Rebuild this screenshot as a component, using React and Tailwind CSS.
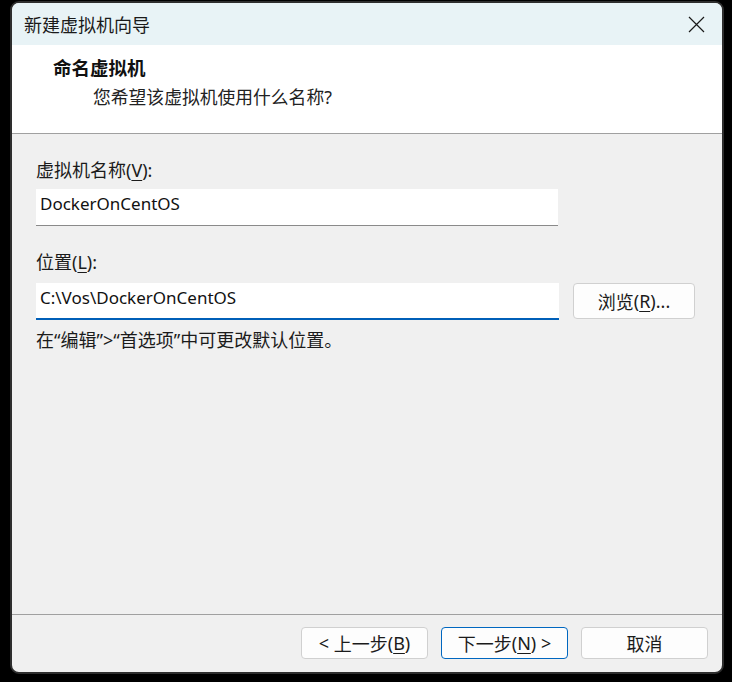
import React from "react";

const cjk = { fontFamily: '"Noto Sans CJK SC", "Noto Sans", sans-serif' };
const latin = { fontFamily: '"Noto Sans", "Noto Sans CJK SC", sans-serif' };

function L({ children }) {
  return <span style={latin}>{children}</span>;
}

function Btn({ children, primary, className = "" }) {
  return (
    <button
      className={`h-[32px] w-[127px] rounded-[4px] bg-[#fdfdfd] text-[18px] text-[#1b1b1b] flex items-center justify-center ${
        primary ? "border border-[#0067c0]" : "border border-[#d0d0d0]"
      } ${className}`}
      style={cjk}
    >
      {children}
    </button>
  );
}

export default function App() {
  return (
    <div className="w-[732px] h-[682px] bg-black pl-[10px] pt-[1px]">
      <div className="w-[714px] h-[673px] border-2 border-[#2e2e2e] rounded-[9px] overflow-hidden flex flex-col bg-[#f0f0f0]">
        {/* title bar */}
        <div className="h-[42px] bg-[#e8f3f6] flex items-center justify-between pl-[12px] pr-[16px] shrink-0">
          <span className="text-[18px] text-[#1a1a1a]" style={cjk}>
            新建虚拟机向导
          </span>
          <svg width="17" height="17" viewBox="0 0 17 17" className="mr-[1px]">
            <path d="M1 1 L16 16 M16 1 L1 16" stroke="#1a1a1a" strokeWidth="1.2" fill="none" />
          </svg>
        </div>
        {/* header */}
        <div className="h-[89px] bg-white border-b border-[#a0a0a0] shrink-0 pl-[41px] pt-[8px]">
          <div className="text-[18.5px] font-bold text-[#111] leading-[28px]" style={cjk}>
            命名虚拟机
          </div>
          <div className="text-[17.8px] text-[#222] leading-[30px] pl-[40px]" style={cjk}>
            您希望该虚拟机使用什么名称<L>?</L>
          </div>
        </div>
        {/* body */}
        <div className="flex-1 pl-[24px] pt-[23px]">
          <div className="text-[18px] text-[#1b1b1b] leading-[24px] h-[32px]" style={cjk}>
            虚拟机名称<L>(<span className="underline underline-offset-[3px]">V</span>):</L>
          </div>
          <div
            className="w-[522px] h-[37px] bg-white border-b border-[#8a8a8a] flex items-center pl-[4px] pb-[7px] text-[17px] text-[#111]"
            style={latin}
          >
            DockerOnCentOS
          </div>
          <div className="h-[57px] pt-[23px] text-[18px] text-[#1b1b1b] leading-[24px]" style={cjk}>
            位置<L>(<span className="underline underline-offset-[3px]">L</span>):</L>
          </div>
          <div className="flex items-center gap-[14px]">
            <div
              className="w-[523px] h-[37px] bg-white border-b-2 border-[#005fb8] flex items-center pl-[4px] pb-[6px] text-[17px] text-[#111]"
              style={latin}
            >
              C:\Vos\DockerOnCentOS
            </div>
            <button
              className="h-[36px] w-[122px] rounded-[4px] bg-[#fdfdfd] border border-[#d0d0d0] text-[18px] text-[#1b1b1b] flex items-center justify-center -mt-[1px]"
              style={cjk}
            >
              浏览<L>(<span className="underline underline-offset-[3px]">R</span>)...</L>
            </button>
          </div>
          <div className="mt-[7px] text-[18px] text-[#1b1b1b] leading-[24px]" style={cjk}>
            在<L>“</L>编辑<L>”&gt;“</L>首选项<L>”</L>中可更改默认位置。
          </div>
        </div>
        {/* footer */}
        <div className="h-[58px] shrink-0 border-t border-[#a0a0a0] flex items-start justify-end gap-[13px] pr-[14px] pt-[12px]">
          <Btn>
            <L>&lt;&nbsp;</L>上一步<L>(<span className="underline underline-offset-[3px]">B</span>)</L>
          </Btn>
          <Btn primary>
            下一步<L>(<span className="underline underline-offset-[3px]">N</span>)&nbsp;&gt;</L>
          </Btn>
          <Btn>取消</Btn>
        </div>
      </div>
    </div>
  );
}
